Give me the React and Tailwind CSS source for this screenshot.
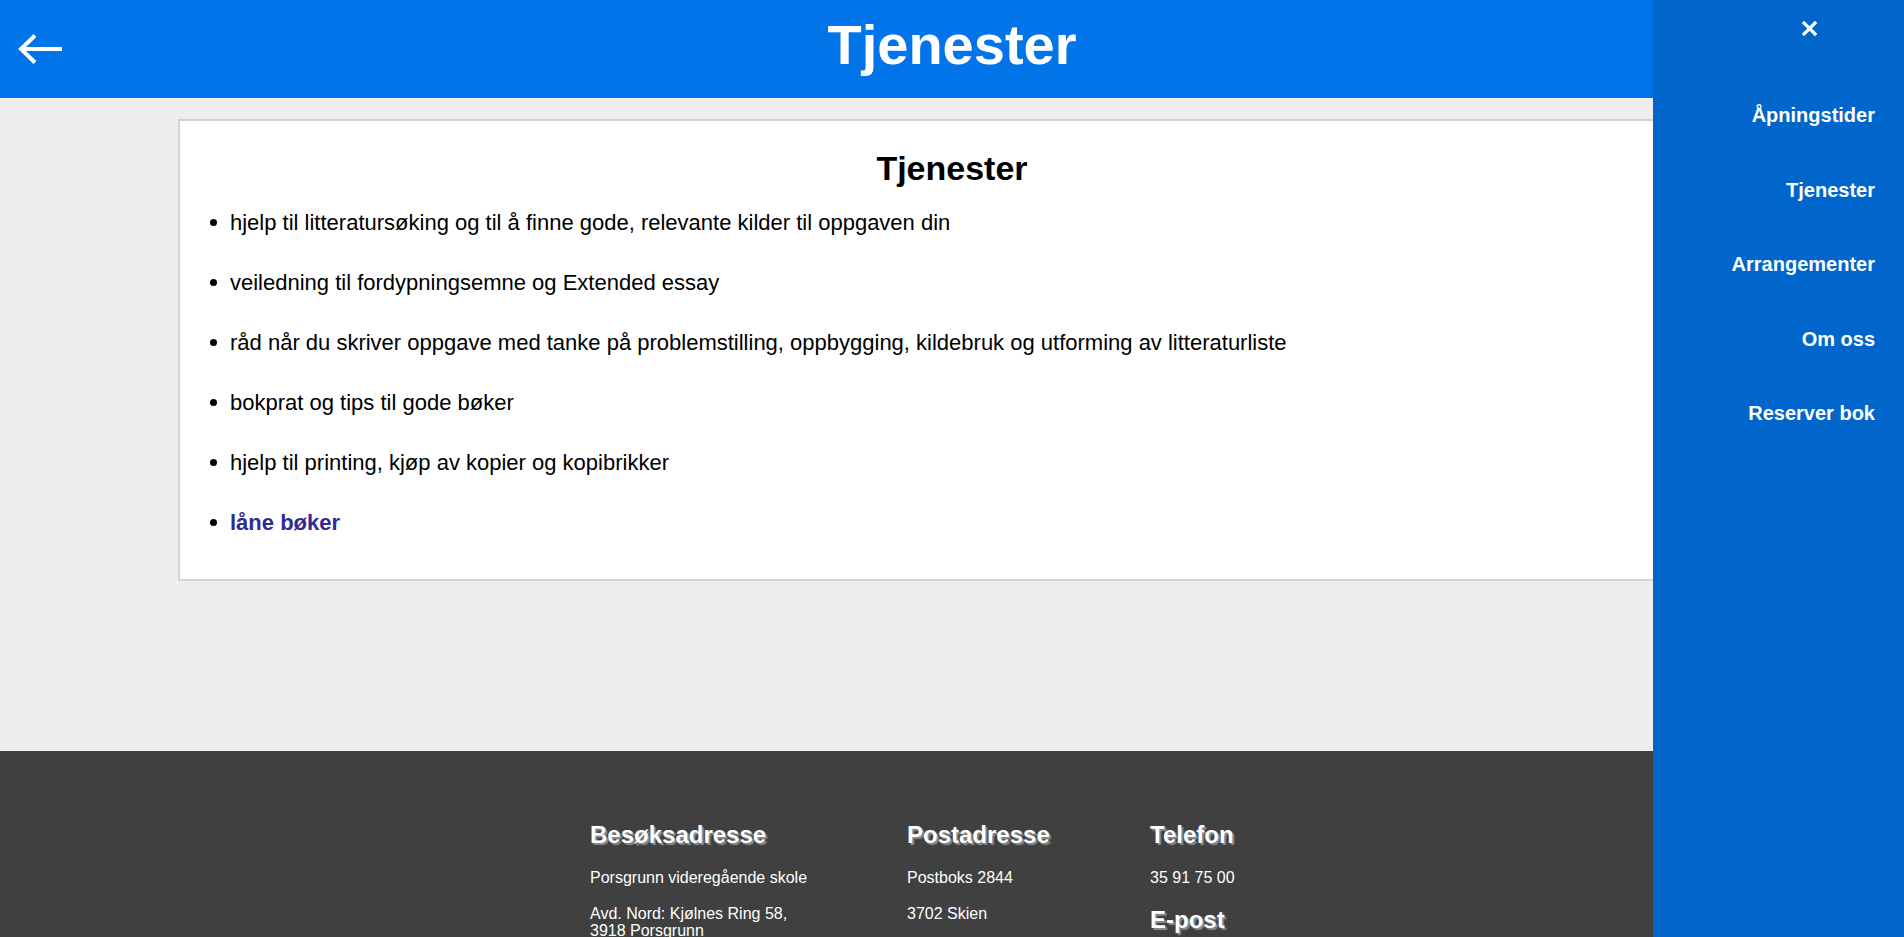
import React from "react";

const services = [
  "hjelp til litteratursøking og til å finne gode, relevante kilder til oppgaven din",
  "veiledning til fordypningsemne og Extended essay",
  "råd når du skriver oppgave med tanke på problemstilling, oppbygging, kildebruk og utforming av litteraturliste",
  "bokprat og tips til gode bøker",
  "hjelp til printing, kjøp av kopier og kopibrikker",
];

const menu = ["Åpningstider", "Tjenester", "Arrangementer", "Om oss", "Reserver bok"];

const FooterHeading = ({ children }) => (
  <h3 className="text-[24px] leading-[28px] font-bold text-white [text-shadow:2px_2px_1px_#8c8c8c]">
    {children}
  </h3>
);

const App = () => {
  return (
    <div className="h-screen overflow-hidden font-['Liberation_Sans',Arial,sans-serif]">
      {/* top bar */}
      <header className="grid grid-cols-[1fr_auto_1fr] items-center h-[98px] bg-[#0074e8]">
        <div className="pl-[18px] pt-[1px]">
          <svg width="46" height="32" viewBox="0 0 46 32" fill="none" stroke="white" strokeWidth="4">
            <path d="M3 15h41" />
            <path d="M17 1.5L3 15l14 13.5" />
          </svg>
        </div>
        <h1 className="pb-[9px] text-[56px] font-bold text-white leading-[64px]">Tjenester</h1>
        <div />
      </header>

      <main className="h-[653px] bg-[#eeeeee] pt-[21px]">
        <div className="mx-[178px] bg-white border-2 border-[#d3d3d3] pt-[28px] pb-[44px]">
          <h1 className="text-center text-[34px] leading-[39px] font-bold text-black">Tjenester</h1>
          <ul className="mt-[22px] flex flex-col gap-[35px]">
            {services.map((s) => (
              <li key={s} className="flex items-center text-[22px] leading-[25px] text-black">
                <span className="ml-[30px] mr-[13px] w-[7px] h-[7px] rounded-full bg-black shrink-0" />
                {s}
              </li>
            ))}
            <li className="flex items-center text-[22px] leading-[25px]">
              <span className="ml-[30px] mr-[13px] w-[7px] h-[7px] rounded-full bg-black shrink-0" />
              <a href="#" className="font-bold text-[#2d2d8f]">låne bøker</a>
            </li>
          </ul>
        </div>
      </main>

      <footer className="h-[186px] overflow-hidden bg-[#404040] pt-[70px] flex justify-center text-white">
        <div className="px-[50px] w-[317px]">
          <FooterHeading>Besøksadresse</FooterHeading>
          <p className="mt-[20px] text-[16px] leading-[18px] whitespace-nowrap">Porsgrunn videregående skole</p>
          <p className="mt-[18px] text-[16px] leading-[17px]">
            Avd. Nord: Kjølnes Ring 58,
            <br />
            3918 Porsgrunn
          </p>
        </div>
        <div className="px-[50px] w-[243px]">
          <FooterHeading>Postadresse</FooterHeading>
          <p className="mt-[20px] text-[16px] leading-[18px]">Postboks 2844</p>
          <p className="mt-[18px] text-[16px] leading-[18px]">3702 Skien</p>
        </div>
        <div className="px-[50px] w-[264px]">
          <FooterHeading>Telefon</FooterHeading>
          <p className="mt-[20px] text-[16px] leading-[18px]">35 91 75 00</p>
          <div className="mt-[19px]">
            <FooterHeading>E-post</FooterHeading>
          </div>
        </div>
      </footer>

      {/* side menu */}
      <nav className="fixed top-0 right-0 h-screen w-[251px] bg-[#0066cc] font-['Liberation_Sans',Arial,sans-serif]">
        <div className="pl-[149px] pt-[21px]">
          <svg width="15" height="15" viewBox="0 0 15 15" stroke="white" strokeWidth="3.2" strokeLinecap="square">
            <path d="M2 2l11 11M13 2L2 13" />
          </svg>
        </div>
        <ul className="mt-[68px] pr-[29px] flex flex-col items-end gap-[51.5px]">
          {menu.map((m) => (
            <li key={m} className="text-[20px] leading-[23px]">
              <a href="#" className="font-bold text-white">{m}</a>
            </li>
          ))}
        </ul>
      </nav>
    </div>
  );
};

export default App;
